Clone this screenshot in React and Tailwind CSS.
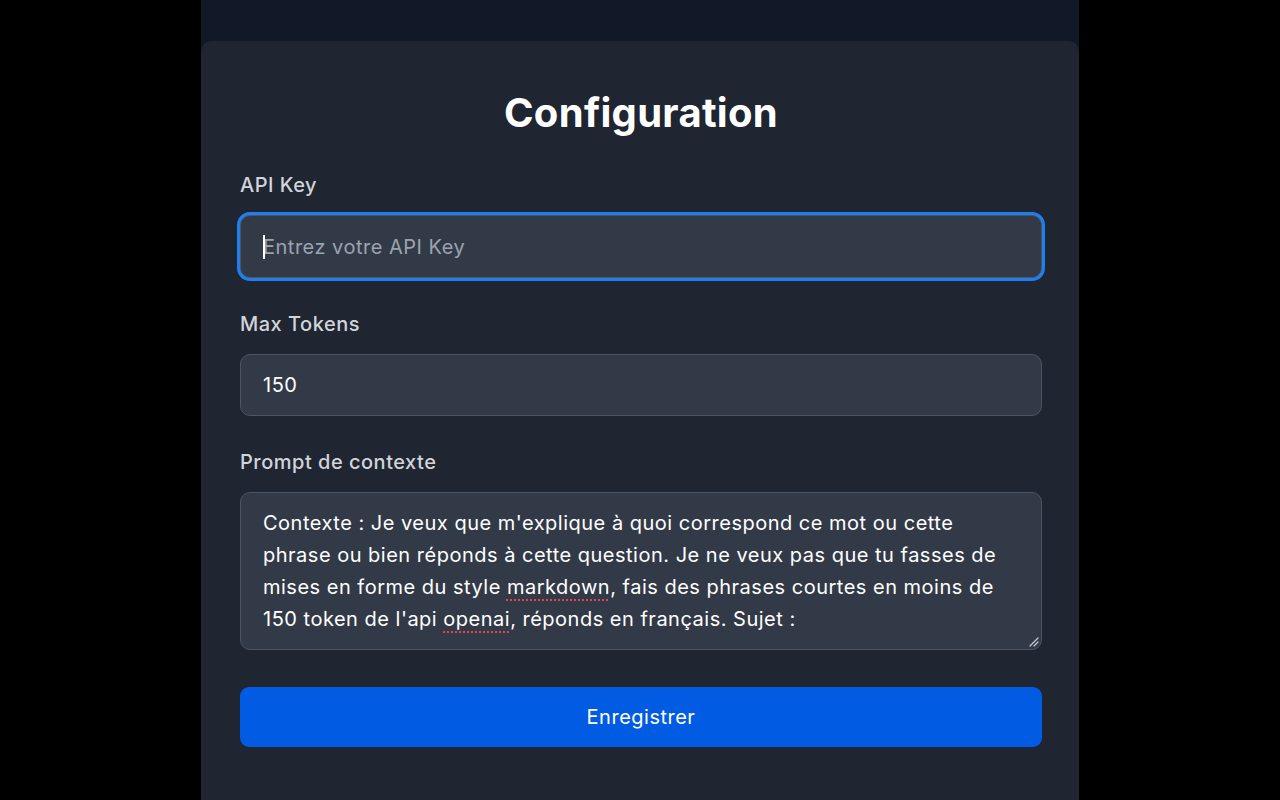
import { useState } from "react";

const prompt = [
  { t: "Contexte : Je veux que m'explique à quoi correspond ce mot ou cette phrase ou bien réponds à cette question. Je ne veux pas que tu fasses de mises en forme du style " },
  { t: "markdown", err: true },
  { t: ", fais des phrases courtes en moins de 150 token de l'api " },
  { t: "openai", err: true },
  { t: ", réponds en français. Sujet :" },
];

export default function App() {
  const [apiKey, setApiKey] = useState("");
  const [maxTokens, setMaxTokens] = useState("150");

  return (
    <div className="min-h-screen bg-black" style={{ fontFamily: "Inter, 'Noto Sans', sans-serif" }}>
      <div className="mx-auto w-[878px] min-h-screen bg-[#111827] pt-[41px]">
        <div className="min-h-[759px] rounded-t-[10px] bg-[#1f2531] pl-[39px] pr-[37px] pt-[48px] pb-[52px]">
          <h1 className="text-center text-[40px] font-bold leading-[48px] tracking-[0.3px] text-white">
            Configuration
          </h1>

          <form className="mt-[34px] flex flex-col tracking-[0.5px]" onSubmit={(e) => e.preventDefault()}>
            {/* API key */}
            <label className="block text-[20px] font-medium leading-[28px] text-[#d1d5db]">API Key</label>
            <div className="relative mt-4">
              <input
                type="text"
                value={apiKey}
                onChange={(e) => setApiKey(e.target.value)}
                placeholder="Entrez votre API Key"
                className="h-[63px] w-full rounded-[10px] border border-[#4b5563] bg-[#323a48] px-[22px] text-[20px] tracking-[0.5px] text-white placeholder-[#9ca3af] outline-none ring-[3px] ring-[#1f7ff0]"
              />
              {!apiKey && <span className="pointer-events-none absolute left-[23px] top-[20px] h-[24px] w-[2px] bg-white" />}
            </div>

            {/* Max tokens */}
            <label className="mt-8 block text-[20px] font-medium leading-[28px] text-[#d1d5db]">Max Tokens</label>
            <input
              type="text"
              value={maxTokens}
              onChange={(e) => setMaxTokens(e.target.value)}
              className="mt-4 h-[62px] w-full rounded-[10px] border border-[#4b5563] bg-[#323a48] px-[22px] text-[20px] tracking-[0.5px] text-white outline-none"
            />

            {/* Prompt */}
            <label className="mt-8 block text-[20px] font-medium leading-[28px] text-[#d1d5db]">Prompt de contexte</label>
            <div className="relative mt-4 h-[158px] w-full rounded-[10px] border border-[#4b5563] bg-[#323a48] px-[22px] pt-[14px] text-[20px] leading-[32px] text-white">
              {prompt.map((p, i) =>
                p.err ? (
                  <span key={i} className="underline decoration-[#e0464b] decoration-dotted decoration-2 underline-offset-[5px]">
                    {p.t}
                  </span>
                ) : (
                  <span key={i}>{p.t}</span>
                )
              )}
              <svg className="absolute bottom-[2px] right-[2px]" width="11" height="11" viewBox="0 0 11 11">
                <path d="M10 2 L2 10 M10 6 L6 10" stroke="#c4c7cc" strokeWidth="1.3" strokeLinecap="round" />
              </svg>
            </div>

            <button
              type="submit"
              className="mt-[37px] h-[60px] w-full rounded-[9px] bg-[#025ce3] text-[20px] tracking-[0.5px] text-white"
            >
              Enregistrer
            </button>
          </form>
        </div>
      </div>
    </div>
  );
}
